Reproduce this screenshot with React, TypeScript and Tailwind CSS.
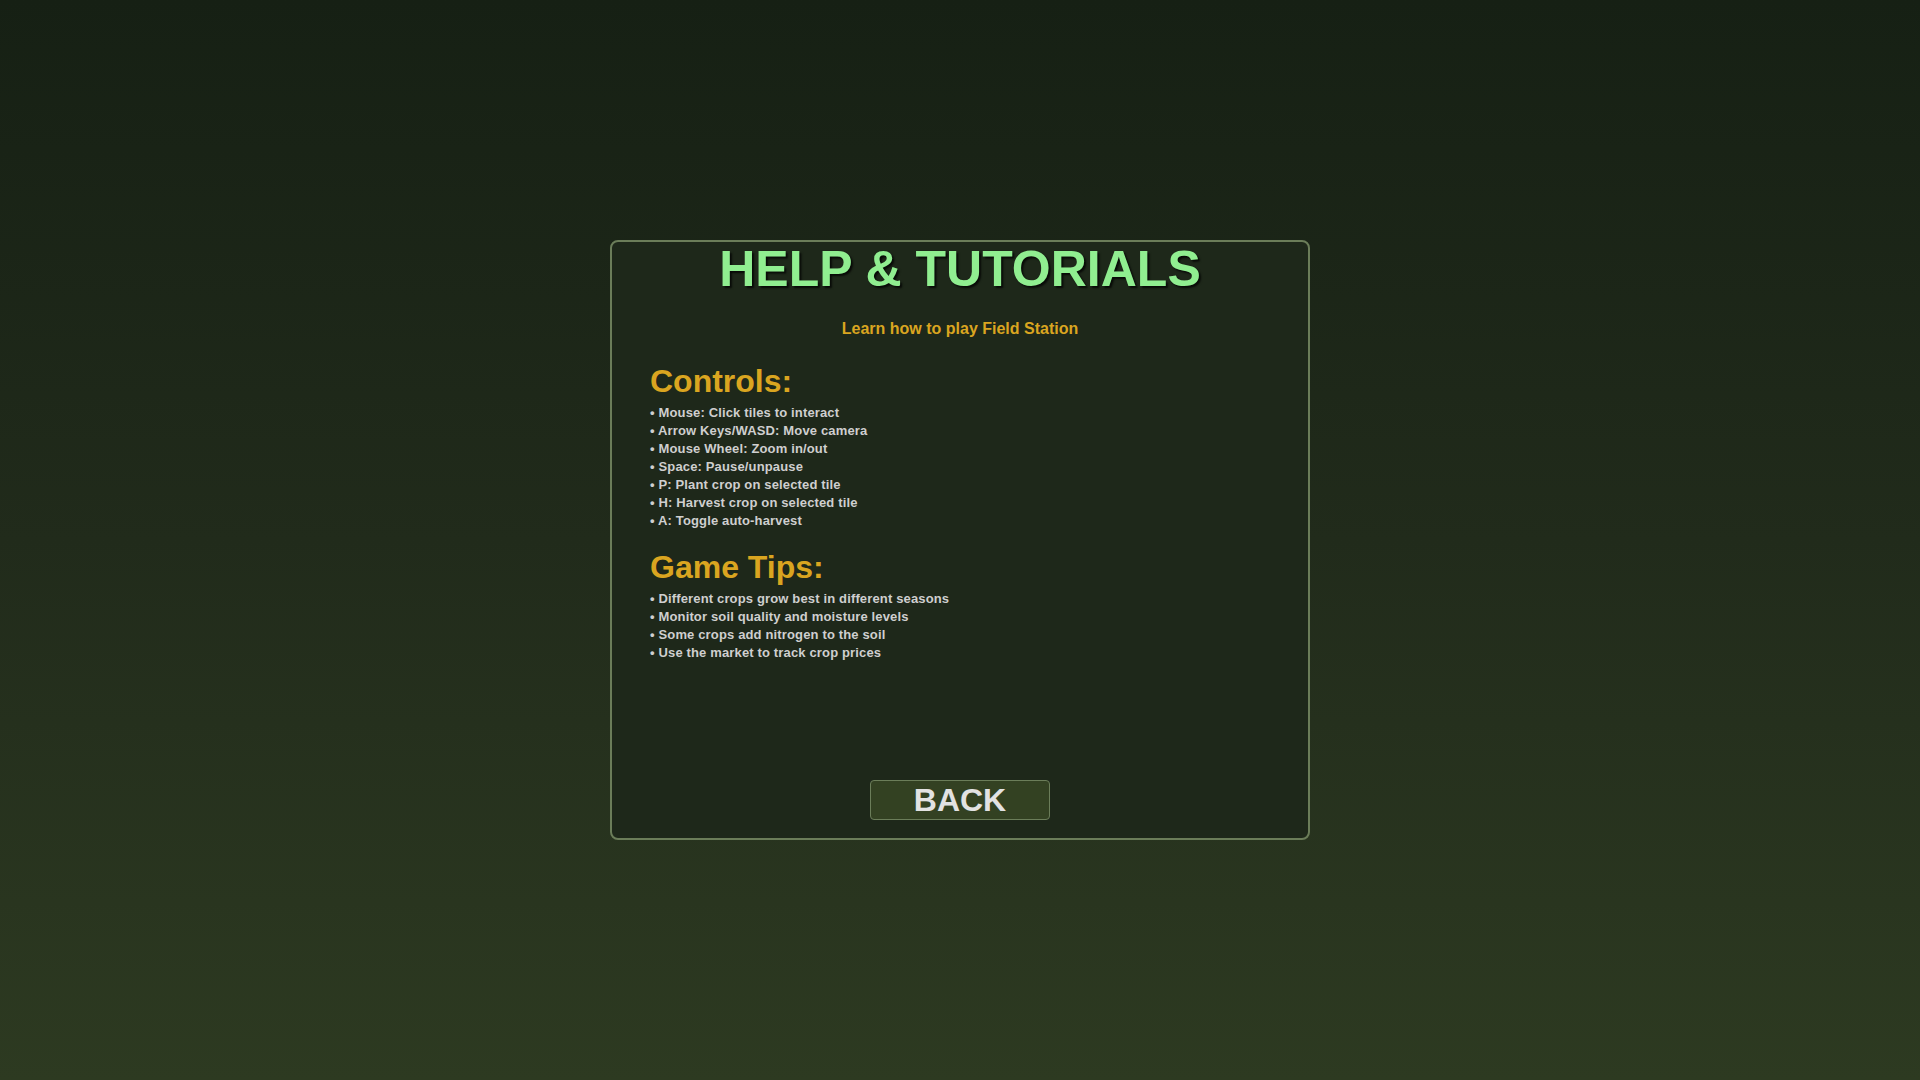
import React from 'react';

const controls = [
  'Mouse: Click tiles to interact',
  'Arrow Keys/WASD: Move camera',
  'Mouse Wheel: Zoom in/out',
  'Space: Pause/unpause',
  'P: Plant crop on selected tile',
  'H: Harvest crop on selected tile',
  'A: Toggle auto-harvest',
];

const tips = [
  'Different crops grow best in different seasons',
  'Monitor soil quality and moisture levels',
  'Some crops add nitrogen to the soil',
  'Use the market to track crop prices',
];

function Section({ title, items, className }: { title: string; items: string[]; className?: string }) {
  return (
    <div className={className}>
      <h2 className="text-[32px] leading-[36px] font-bold text-[#daa520]">{title}</h2>
      <ul className="mt-[5px]">
        {items.map((item) => (
          <li key={item} className="text-[13px] leading-[18px] font-bold tracking-[0.15px] text-[#cfcfcf] whitespace-nowrap">
            • {item}
          </li>
        ))}
      </ul>
    </div>
  );
}

export default function App() {
  return (
    <div
      className="min-h-screen w-full flex items-center justify-center bg-linear-to-b from-[#162014] via-[#212b1b] to-[#2d3a21]"
      style={{ fontFamily: '"Liberation Sans", Arial, sans-serif' }}
    >
      <div className="w-[700px] h-[600px] border-2 border-[#6b7d59] rounded-[8px] bg-[#1e281a] flex flex-col pb-[18px]">
        <h1 className="pt-[2px] text-center text-[50px] leading-[50px] font-bold text-[#90ee90] [text-shadow:2px_2px_2px_rgba(0,0,0,0.75)]">
          HELP &amp; TUTORIALS
        </h1>
        <p className="mt-[25px] text-center text-[16px] leading-[20px] font-bold text-[#daa520]">
          Learn how to play Field Station
        </p>

        <div className="px-[38px]">
          <Section title="Controls:" items={controls} className="mt-[24px]" />
          <Section title="Game Tips:" items={tips} className="mt-[19px]" />
        </div>

        <div className="mt-auto flex justify-center">
          <button className="w-[180px] h-[40px] border border-[#6b7d59] rounded-[4px] bg-[#334122] text-[32px] leading-none font-bold text-[#e2e2e2]">
            BACK
          </button>
        </div>
      </div>
    </div>
  );
}
